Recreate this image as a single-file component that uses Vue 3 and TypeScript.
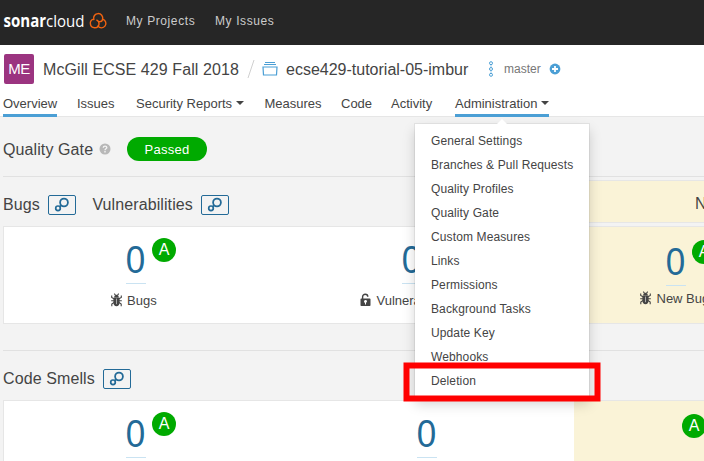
<script setup lang="ts">
import { h, type FunctionalComponent } from 'vue'

interface Tab {
  label: string
  key: string
  active?: boolean
  caret?: boolean
}

const tabs: Tab[] = [
  { label: 'Overview', key: 'overview', active: true },
  { label: 'Issues', key: 'issues' },
  { label: 'Security Reports', key: 'security', caret: true },
  { label: 'Measures', key: 'measures' },
  { label: 'Code', key: 'code' },
  { label: 'Activity', key: 'activity' },
  { label: 'Administration', key: 'admin', active: true, caret: true },
]

const menu: string[] = [
  'General Settings',
  'Branches & Pull Requests',
  'Quality Profiles',
  'Quality Gate',
  'Custom Measures',
  'Links',
  'Permissions',
  'Background Tasks',
  'Update Key',
  'Webhooks',
  'Deletion',
]

const BugIcon: FunctionalComponent = () =>
  h('svg', { width: 11, height: 14, viewBox: '0 0 11 14' }, [
    h('path', {
      d: 'M3.2 4.4C3.2 2.6 4.2 1.800 5.5 1.800s2.300.800 2.300 2.600zM2.400 4.700h6.200v4.600c0 2.500-1.300 3.900-3.100 3.900S2.400 11.800 2.400 9.300z',
      fill: '#444',
    }),
    h('path', {
      d: 'M3.300.600l1.200 1.700M7.700.600L6.500 2.300M.700 2.500v2l2.200 1.200M10.300 2.500v2L8 5.700M.200 7.700h2.700M8 7.700h2.800M3 9.500L.800 11v2.200M8 9.500l2.200 1.500v2.200',
      fill: 'none',
      stroke: '#444',
      'stroke-width': 1.100,
    }),
    h('path', { d: 'M5.500 5.600v5.600', stroke: '#aaa', 'stroke-width': 1 }),
  ])

const LinkIcon: FunctionalComponent = () =>
  h('svg', { width: 16, height: 16, viewBox: '0 0 16 16', fill: 'none', stroke: '#236a97' }, [
    h('circle', { cx: 10, cy: 5.5, r: 3.9, 'stroke-width': 1.8 }),
    h('circle', { cx: 4, cy: 11.3, r: 2.3, 'stroke-width': 1.7 }),
    h('path', { d: 'M7 8.500L5.800 9.500', 'stroke-width': 1.800 }),
  ])
</script>

<template>
  <div class="page">
    <header class="global">
      <svg class="logo" width="108" height="30" viewBox="0 0 108 30">
        <text x="3.500" y="22" class="logo-text" textLength="81" lengthAdjust="spacingAndGlyphs"><tspan class="logo-bold">sonar</tspan>cloud</text>
        <g transform="translate(6.500 1.900) scale(0.93)" fill="none" stroke="#f26411" stroke-width="1.500" stroke-linecap="round">
          <path d="M93.900 13.600A4.900 4.900 0 1 1 103.300 13.300C103 14.900 101.300 16 99.600 15.800" />
          <path d="M93.600 13.200A4.700 4.700 0 1 0 99.500 18.500C99.700 16.600 98.500 14.900 97.100 14.200" />
          <path d="M103.500 13.300A4.700 4.700 0 1 1 98.400 20.600" />
        </g>
      </svg>
      <a class="projects">My Projects</a>
      <a class="issues-link">My Issues</a>
    </header>

    <section class="context">
      <div class="crumbs">
        <span class="avatar">ME</span>
        <span class="org">McGill ECSE 429 Fall 2018</span>
        <svg class="slash" width="8" height="20" viewBox="0 0 8 20">
          <path d="M7 1L1 19" stroke="#d0d0d0" fill="none" />
        </svg>
        <svg class="project-icon" width="16" height="14" viewBox="0 0 16 14" fill="none" stroke="#4b9fd5">
          <path d="M3 .500h10M2 2.500h12" />
          <path d="M1 5h14l-.500 8h-13z" stroke-width="1.200" />
        </svg>
        <span class="project">ecse429-tutorial-05-imbur</span>
        <svg class="branch-icon" width="6" height="16" viewBox="0 0 6 16" fill="none" stroke="#4b9fd5">
          <path d="M3 4v2M3 10v2" stroke="#a5cfea" />
          <circle cx="3" cy="2.200" r="1.500" />
          <circle cx="3" cy="8" r="1.500" />
          <circle cx="3" cy="13.800" r="1.500" />
        </svg>
        <span class="branch">master</span>
        <svg class="plus" width="12" height="12" viewBox="0 0 12 12">
          <circle cx="6" cy="6" r="5.400" fill="#4b9fd5" />
          <path d="M6 3v6M3 6h6" stroke="#fff" stroke-width="1.800" />
        </svg>
      </div>
      <nav class="tabs">
        <a v-for="tab in tabs" :key="tab.key" class="tab" :class="[tab.key, { active: tab.active }]">
          {{ tab.label }}<i v-if="tab.caret" class="caret"></i>
        </a>
      </nav>
    </section>

    <main class="overview">
      <div class="gate">
        <h2 class="gate-title">Quality Gate</h2>
        <svg class="help" width="12" height="12" viewBox="0 0 12 12">
          <circle cx="6" cy="6" r="5.500" fill="#b8b8b8" />
          <path d="M4.300 4.700C4.300 2.500 7.800 2.600 7.800 4.600C7.800 5.800 6 5.700 6 7.200M6 8v1.400" fill="none" stroke="#f3f3f3" stroke-width="1.400" />
        </svg>
        <span class="pill">Passed</span>
      </div>

      <section class="domain first">
        <div class="domain-head">
          <h2>Bugs</h2>
          <a class="open"><LinkIcon /></a>
          <h2 class="vulnerabilities">Vulnerabilities</h2>
          <a class="open"><LinkIcon /></a>
          <div class="leak-head">N</div>
        </div>
        <div class="card">
          <div class="nutshell">
            <div class="measure bugs">
              <div class="value"><a><span>0</span></a><b class="rating">A</b></div>
              <div class="label"><BugIcon />Bugs</div>
            </div>
            <div class="measure vulns">
              <div class="value"><a><span>0</span></a></div>
              <div class="label">
                <svg width="11" height="14" viewBox="0 0 11 14">
                  <path d="M2.600 6V3.800a2.600 2.600 0 0 1 5.200 0" fill="none" stroke="#444" stroke-width="1.400" />
                  <path fill-rule="evenodd" d="M1.300 5.500h8.400q.800 0 .800.800v5.900q0 .800-.800.800H1.300q-.800 0-.800-.800V6.300q0-.800.800-.800zM4 8.400a1.500 1.500 0 0 0 1 1.400V11.500h1V9.800A1.500 1.500 0 1 0 4 8.400z" fill="#444" />
                </svg>Vulnerabilities
              </div>
            </div>
          </div>
          <div class="leak">
            <div class="measure new-bugs">
              <div class="value"><a><span>0</span></a><b class="rating">A</b></div>
              <div class="label"><BugIcon />New Bugs</div>
            </div>
          </div>
        </div>
      </section>

      <section class="domain second">
        <div class="domain-head">
          <h2>Code Smells</h2>
          <a class="open"><LinkIcon /></a>
        </div>
        <div class="card">
          <div class="nutshell">
            <div class="measure bugs">
              <div class="value"><a><span>0</span></a><b class="rating">A</b></div>
            </div>
            <div class="measure smells">
              <div class="value"><a><span>0</span></a></div>
            </div>
          </div>
          <div class="leak">
            <div class="debt"><b class="rating">A</b></div>
          </div>
        </div>
      </section>
    </main>

    <ul class="menu">
      <li v-for="item in menu" :key="item">{{ item }}</li>
    </ul>
    <svg class="highlight" width="200" height="42" viewBox="0 0 200 42">
      <rect x="4.500" y="3.500" width="191" height="33" fill="none" stroke="#f00" stroke-width="6" />
    </svg>
  </div>
</template>

<style>
body {
  margin: 0;
  overflow: hidden;
}
</style>

<style scoped>
* {
  box-sizing: border-box;
}
.page {
  position: relative;
  width: 704px;
  height: 461px;
  overflow: hidden;
  background: #f3f3f3;
  color: #444;
  font: 13px/20px "Liberation Sans", Arial, sans-serif;
  white-space: nowrap;
}
svg {
  display: block;
  flex: none;
}
.global {
  display: flex;
  align-items: center;
  height: 45px;
  background: #262626;
  color: #ccc;
  font-size: 12px;
  letter-spacing: 0.6px;
}
.logo {
  margin-top: -5px;
}
.logo-text {
  fill: #fff;
  font-family: "Open Sans", "Noto Sans", sans-serif;
  font-size: 17px;
  letter-spacing: 0;
}
.logo-bold {
  font-weight: 700;
}
.projects {
  margin: -4px 0 0 18px;
  width: 89px;
}
.issues-link {
  margin-top: -4px;
}
.context {
  height: 72px;
  background: #fff;
  border-bottom: 1px solid #e6e6e6;
}
.crumbs {
  display: flex;
  align-items: center;
  height: 48px;
  padding-left: 4px;
  font-size: 16px;
}
.avatar {
  width: 30px;
  height: 30px;
  margin-right: 9px;
  border-radius: 2px;
  background: #9b3480;
  color: #fff;
  font-size: 15px;
  line-height: 30px;
  letter-spacing: -0.5px;
  text-align: center;
}
.org,
.project {
  padding-top: 2px;
}
.org {
  width: 204px;
  letter-spacing: 0.08px;
}
.project-icon {
  margin: 0 8px 0 7px;
}
.project {
  width: 202px;
}
.branch-icon {
  margin-right: 10px;
}
.branch {
  width: 44px;
  color: #777;
  font-size: 12px;
}
.plus {
  margin-left: 1px;
}
.tabs {
  display: grid;
  grid-template-columns: 74px 59px 128.500px 76.500px 50px 64px 94px;
  height: 24px;
  padding-left: 3px;
}
.tab {
  justify-self: start;
  height: 24px;
  line-height: 22px;
}
.tab.active {
  border-bottom: 3px solid #4b9fd5;
}
.tab.admin {
  width: 94px;
}
.caret {
  display: inline-block;
  margin-left: 4px;
  vertical-align: 3px;
  border: 4px solid transparent;
  border-top-color: #444;
  border-bottom: 0;
}
.gate {
  display: flex;
  align-items: center;
  height: 60px;
  margin-left: 3px;
  padding-top: 4px;
  border-bottom: 1px solid #e1e1e1;
}
h2 {
  margin: 0;
  font-size: 16px;
  font-weight: 400;
  letter-spacing: 0.1px;
}
.gate-title {
  width: 95px;
  padding-top: 2px;
}
.help {
  margin-left: 0.500px;
}
.pill {
  width: 80px;
  height: 24px;
  margin-left: 16.500px;
  border-radius: 12px;
  background: #0a0;
  color: #fff;
  line-height: 25px;
  text-align: center;
  letter-spacing: 0.3px;
}
.domain {
  margin-left: 3px;
}
.domain-head {
  display: flex;
  align-items: center;
  height: 49px;
}
.open {
  display: flex;
  justify-content: center;
  width: 28px;
  height: 20px;
  margin-left: 8.500px;
  padding-top: 1px;
  border: 1px solid #236a97;
  border-radius: 2px;
}
.first .domain-head {
  padding-top: 7px;
}
.vulnerabilities {
  margin-left: 16px;
}
.leak-head {
  width: 131px;
  height: 43px;
  margin: -7px 0 0 auto;
  padding-left: 121px;
  border: 1px solid #e6e6e6;
  border-right: 0;
  background: #faf3d7;
  font-size: 16px;
  line-height: 45px;
}
.card {
  display: grid;
  grid-template-columns: 570px 1fr;
  height: 98px;
  border: 1px solid #e6e6e6;
  border-right: 0;
  background: #fff;
}
.nutshell {
  display: grid;
  grid-template-columns: 245px 1fr;
}
.leak {
  background: #faf3d7;
}
.measure {
  padding-top: 12px;
}
.value {
  display: flex;
  align-items: flex-start;
  gap: 6px;
}
.value a {
  display: flex;
  justify-content: center;
  width: 20px;
  height: 45px;
  border-bottom: 1px solid #cae3f2;
  color: #236a97;
  font-size: 38px;
  line-height: 43px;
}
.value span {
  transform: scaleX(0.92);
}
.rating {
  display: block;
  width: 24px;
  height: 24px;
  flex: none;
  margin-top: -1px;
  border-radius: 50%;
  background: #0a0;
  color: #fff;
  font-size: 16px;
  font-weight: 400;
  line-height: 24px;
  text-align: center;
}
.label {
  display: flex;
  align-items: center;
  gap: 5.500px;
  height: 20px;
  margin-top: 7px;
}
.label svg {
  margin-top: -3px;
}
.bugs .value {
  padding-left: 122px;
}
.bugs .label {
  padding-left: 106.500px;
}
.vulns .value {
  padding-left: 153px;
}
.vulns .label {
  padding-left: 111px;
}
.smells .value {
  padding-left: 168px;
}
.new-bugs {
  padding-top: 14px;
}
.new-bugs .value {
  padding-left: 92px;
}
.new-bugs .label {
  margin-top: 3px;
  padding-left: 66px;
}
.debt {
  padding: 14px 0 0 108px;
}
.second {
  margin-top: 26px;
  border-top: 1px solid #e1e1e1;
}
.second .domain-head {
  padding-top: 7px;
}
.menu {
  position: absolute;
  top: 124px;
  left: 415px;
  width: 174px;
  height: 274px;
  margin: 0;
  padding: 5px 0 5px 16px;
  background: #fff;
  box-shadow: 0 0 0 1px rgba(0, 0, 0, 0.06), 0 6px 12px rgba(0, 0, 0, 0.175);
  list-style: none;
  font-size: 12px;
  line-height: 24px;
  letter-spacing: 0.12px;
}
.menu::before {
  content: "";
  position: absolute;
  top: -5px;
  left: 82px;
  border: 5px solid transparent;
  border-top: 0;
  border-bottom-color: #fff;
}
.highlight {
  position: absolute;
  top: 362px;
  left: 402px;
}
</style>
